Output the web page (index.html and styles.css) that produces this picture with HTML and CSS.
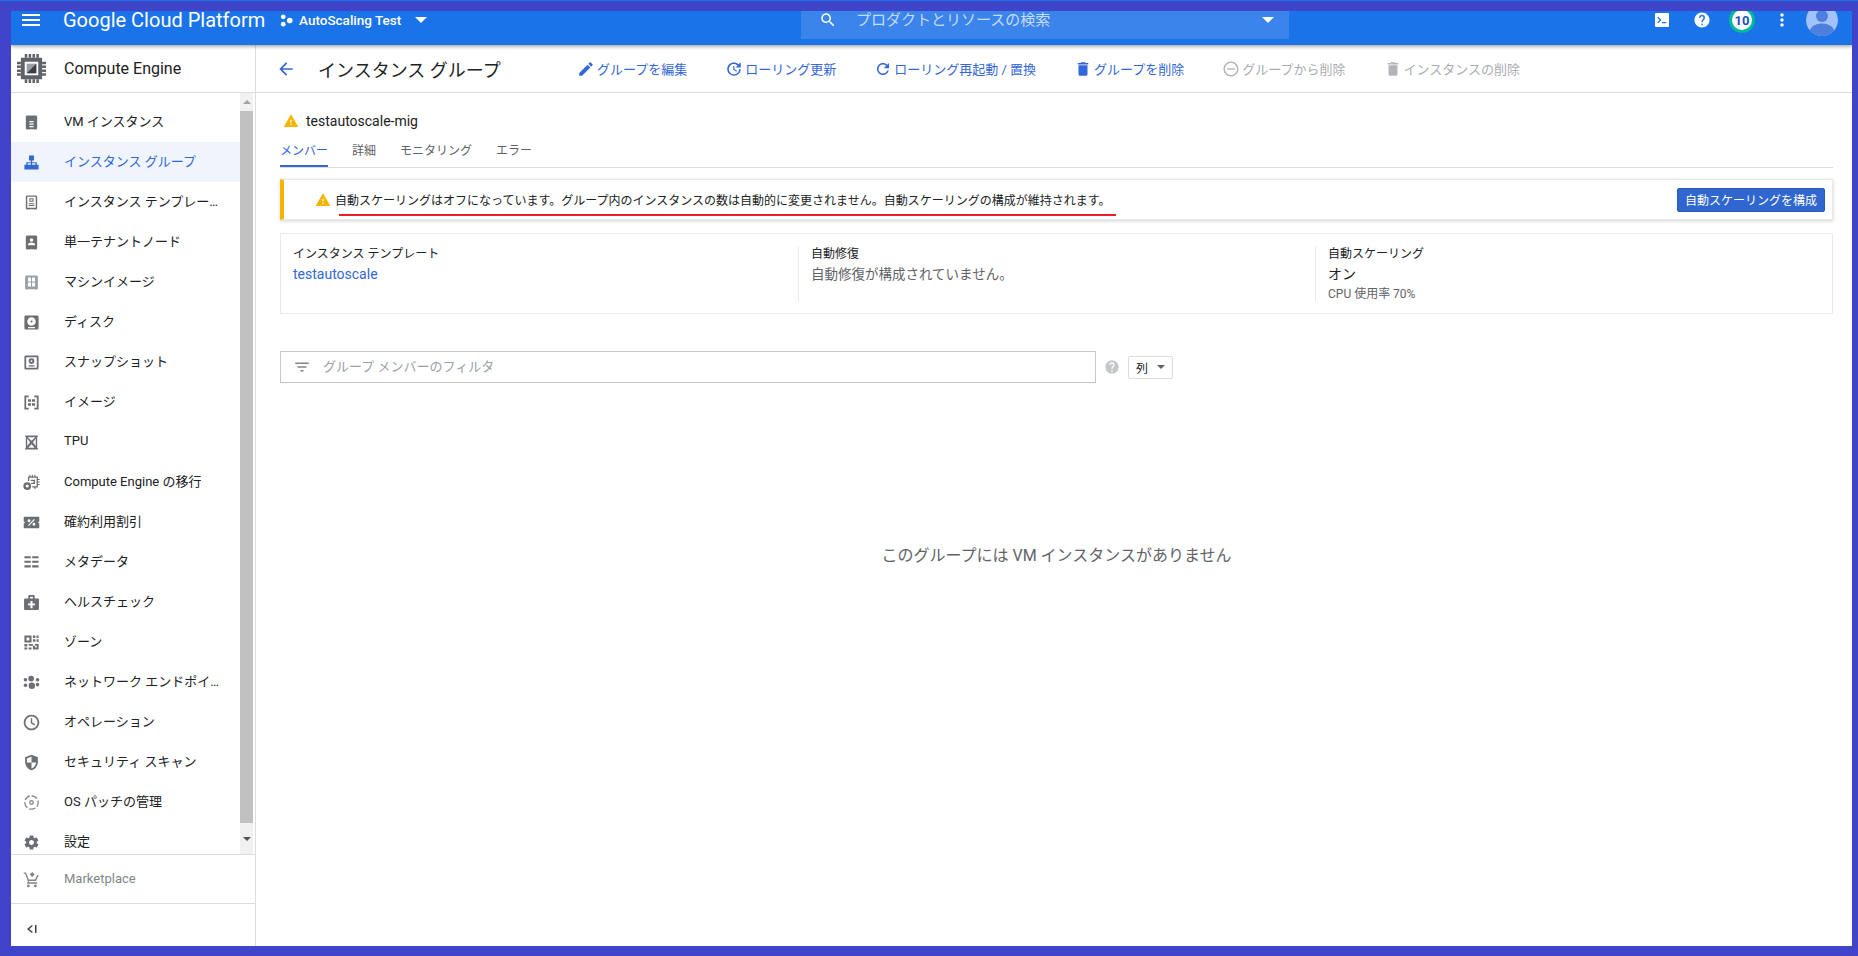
FILE: index.html
```html
<!DOCTYPE html>
<html lang="ja">
<head>
  <meta charset="UTF-8" />
  <meta name="viewport" content="width=device-width, initial-scale=1.0"/>
  <title>インスタンス グループ</title>
  <link rel="stylesheet" href="styles.css">
</head>
<body>

<div class="frame">
  <!-- 上部バー -->
  <header class="topbar">
    <svg class="menu-icon" viewBox="0 0 24 24"><path d="M3 18h18v-2H3v2zm0-5h18v-2H3v2zm0-7v2h18V6H3z"/></svg>
    <span class="brand">Google Cloud Platform</span>
    <svg class="project-icon" viewBox="0 0 12 12"><circle cx="3" cy="2.600" r="2.200"/><circle cx="3" cy="9.400" r="2.200"/><circle cx="9" cy="6" r="2.600"/></svg>
    <span class="project-name">AutoScaling Test</span>
    <span class="caret caret-project"></span>
    <div class="search-box">
      <svg class="search-icon" viewBox="0 0 24 24"><path d="M15.500 14h-.79l-.28-.27C15.410 12.590 16 11.110 16 9.500 16 5.910 13.090 3 9.500 3S3 5.910 3 9.500 5.910 16 9.500 16c1.610 0 3.090-.59 4.230-1.570l.27.28v.79l5 4.990L20.490 19l-4.990-5zm-6 0C7.010 14 5 11.990 5 9.500S7.010 5 9.500 5 14 7.010 14 9.500 11.990 14 9.500 14z"/></svg>
      <span class="search-text">プロダクトとリソースの検索</span>
      <span class="caret caret-search"></span>
    </div>
    <div class="topbar-right">
      <svg class="terminal-icon" viewBox="0 0 14 14"><path fill-rule="evenodd" d="M1 0h12a1 1 0 0 1 1 1v12a1 1 0 0 1-1 1H1a1 1 0 0 1-1-1V1a1 1 0 0 1 1-1zm1.200 4.600L4.600 7 2.200 9.400l1 .9L6.500 7 3.200 3.700zM7 9v1.300h4.200V9z"/></svg>
      <svg class="help-icon" viewBox="0 0 24 24"><path d="M12 2C6.480 2 2 6.480 2 12s4.480 10 10 10 10-4.480 10-10S17.520 2 12 2zm1 17h-2v-2h2v2zm2.070-7.750l-.9.92C13.450 12.900 13 13.500 13 15h-2v-.5c0-1.100.45-2.100 1.170-2.830l1.240-1.260c.37-.36.59-.86.59-1.410 0-1.100-.9-2-2-2s-2 .9-2 2H8c0-2.210 1.790-4 4-4s4 1.790 4 4c0 .88-.36 1.680-.93 2.250z"/></svg>
      <span class="badge">10</span>
      <svg class="more-icon" viewBox="0 0 24 24"><path d="M12 8c1.100 0 2-.9 2-2s-.9-2-2-2-2 .9-2 2 .9 2 2 2zm0 2c-1.100 0-2 .9-2 2s.9 2 2 2 2-.9 2-2-.9-2-2-2zm0 6c-1.100 0-2 .9-2 2s.9 2 2 2 2-.9 2-2-.9-2-2-2z"/></svg>
      <svg class="avatar" viewBox="0 0 32 32"><defs><clipPath id="avatarClip"><circle cx="16" cy="16" r="16"/></clipPath></defs><circle cx="16" cy="16" r="16" fill="#a1c2fa"/><g clip-path="url(#avatarClip)" fill="#4d7fdc"><circle cx="16" cy="12" r="6"/><ellipse cx="16" cy="27" rx="12" ry="7.500"/></g></svg>
    </div>
  </header>

  <div class="body-row">
    <!-- サイドバー -->
    <aside class="sidebar">
      <div class="product">
        <svg class="chip-icon" viewBox="0 0 30 30">
          <path fill="#5f6368" d="M8 0h2.600v4H8zM12 0h2.600v4H12zM16 0h2.600v4H16zM20 0h2.600v4H20zM8 26h2.600v4H8zM12 26h2.600v4H12zM16 26h2.600v4H16zM20 26h2.600v4H20zM0 8h4v2.600H0zM0 12h4v2.600H0zM0 16h4v2.600H0zM0 20h4v2.600H0zM26 8h4v2.600h-4zM26 12h4v2.600h-4zM26 16h4v2.600h-4zM26 20h4v2.600h-4z"/>
          <path fill="#5f6368" fill-rule="evenodd" d="M4 4h22v22H4zM8 8v14h14V8z"/>
          <path fill="#9aa0a6" d="M10 10h10v10H10z"/>
          <path fill="#3c4043" d="M20 10v10H10z"/>
        </svg>
        <span class="product-name">Compute Engine</span>
      </div>

      <div class="nav-wrap">
        <ul class="nav">
          <li class="nav-item"><svg viewBox="0 0 24 24"><path fill-rule="evenodd" d="M6 2h12a2 2 0 0 1 2 2v16a2 2 0 0 1-1 1.700V22h-4v-.5H9v.5H5v-.3A2 2 0 0 1 4 20V4a2 2 0 0 1 2-2zm3 8v1.800h6V10zm0 3.500v1.800h6v-1.800zm0 3.500v1.800h6V17z"/></svg><span>VM インスタンス</span></li>
          <li class="nav-item active"><svg viewBox="0 0 24 24"><path d="M8.500 2h7v7h-2.600v2.500h6.500V15H22v7h-7v-7h2.500v-2H12.800v2H15.500v7h-7v-7h2.700v-2H6.500v2H9v7H2v-7h2.600v-3.500h6.500V9H8.500z"/></svg><span>インスタンス グループ</span></li>
          <li class="nav-item"><svg viewBox="0 0 24 24"><path fill-rule="evenodd" d="M6 2h12a2 2 0 0 1 2 2v16a2 2 0 0 1-1 1.700V22h-4v-.5H9v.5H5v-.3A2 2 0 0 1 4 20V4a2 2 0 0 1 2-2zm0 2v15.500h12V4zm3 2h6v5H9zm1.500 1.500v2h3v-2zM8 13h8v1.500H8zm0 2.500h8V17H8z"/></svg><span>インスタンス テンプレート</span></li>
          <li class="nav-item"><svg viewBox="0 0 24 24"><path fill-rule="evenodd" d="M6 2h12a2 2 0 0 1 2 2v16a2 2 0 0 1-1 1.700V22h-4v-.5H9v.5H5v-.3A2 2 0 0 1 4 20V4a2 2 0 0 1 2-2zm6 4a2.500 2.500 0 1 0 0 5 2.500 2.500 0 0 0 0-5zm-5 10h10v-1.500c0-1.500-3-2.500-5-2.500s-5 1-5 2.500z"/></svg><span>単一テナントノード</span></li>
          <li class="nav-item"><svg class="light" viewBox="0 0 24 24"><path fill-rule="evenodd" d="M5 2h14a2 2 0 0 1 2 2v16a2 2 0 0 1-1 1.700V22h-3v-.5H7v.5H4v-.3A2 2 0 0 1 3 20V4a2 2 0 0 1 2-2zm2 3v5.500h4.300V5zm5.700 0v5.500H17V5zM7 12v5.500h4.300V12zm5.700 0v5.500H17V12z"/></svg><span>マシンイメージ</span></li>
          <li class="nav-item"><svg viewBox="0 0 24 24"><path fill-rule="evenodd" d="M4 2h16a2 2 0 0 1 2 2v16a2 2 0 0 1-2 2H4a2 2 0 0 1-2-2V4a2 2 0 0 1 2-2zm8 2.500a6 6 0 1 0 0 12 6 6 0 0 0 0-12zm0 4.500a1.500 1.500 0 1 1 0 3 1.500 1.500 0 0 1 0-3zM7 18.500V20h10v-1.500z"/></svg><span>ディスク</span></li>
          <li class="nav-item"><svg viewBox="0 0 24 24"><path fill-rule="evenodd" d="M4 2h16a2 2 0 0 1 2 2v16a2 2 0 0 1-2 2H4a2 2 0 0 1-2-2V4a2 2 0 0 1 2-2zm.5 2.500v15h15v-15zM12 6a4 4 0 1 1 0 8 4 4 0 0 1 0-8zm0 2.700a1.300 1.300 0 1 0 0 2.600 1.300 1.300 0 0 0 0-2.600zM8 16h8v1.500H8z"/></svg><span>スナップショット</span></li>
          <li class="nav-item"><svg viewBox="0 0 24 24"><path fill-rule="evenodd" d="M2 2h6v2.500H4.500v15H8V22H2zM16 2h6v20h-6v-2.500h3.500v-15H16zM7 7.500h4.300v3.500H7zm5.700 0H17v3.500h-4.300zM7 13h4.300v3.500H7zm5.700 0H17v3.500h-4.300z"/></svg><span>イメージ</span></li>
          <li class="nav-item"><svg viewBox="0 0 24 24"><path fill-rule="evenodd" d="M3 2h18v1.500l-1 1v15l1 1V22H3v-1.500l1-1v-15l-1-1zm3.500 2.500L12 9.500l5.500-5zM6 6.500v10.500l4-5.500zM18 6.500L14 11.500l4 5.500zM12 14.500l-4.500 5h9z"/></svg><span>TPU</span></li>
          <li class="nav-item"><svg viewBox="0 0 24 24"><path fill-rule="evenodd" d="M9 1h1.500v2.500h2V1H14v2.500h2V1h1.500v2.500H21v3.500h2.500v1.500H21v2h2.500V12H21v2h2.500v1.500H21v3.500h-3.500V21H16v-2h-3v-1.800h6.200V5.300H8.800V10H7V3.500h2zM11 8h6v6h-5.500v-1.800H15V10h-4z"/><path fill-rule="evenodd" d="M6 11.500a5.500 5.500 0 1 1 0 11 5.500 5.500 0 0 1 0-11zm0 3.300a2.200 2.200 0 1 0 0 4.400 2.200 2.200 0 0 0 0-4.400z"/></svg><span>Compute Engine の移行</span></li>
          <li class="nav-item"><svg class="wide" viewBox="0 0 24 18"><path fill-rule="evenodd" d="M2 1h20a1 1 0 0 1 1 1v5.500a1.500 1.500 0 0 0 0 3V16a1 1 0 0 1-1 1H2a1 1 0 0 1-1-1v-5.500a1.500 1.500 0 0 0 0-3V2a1 1 0 0 1 1-1zm6.500 3.500a2 2 0 1 0 0 4 2 2 0 0 0 0-4zm7-.3L7 13l1.200 1L16.700 5.200zM15.500 9.500a2 2 0 1 0 0 4 2 2 0 0 0 0-4z"/></svg><span>確約利用割引</span></li>
          <li class="nav-item"><svg viewBox="0 0 24 24"><path d="M2 3h9v3H2zM13 3h9v3h-9zM2 9.500h9v3H2zM13 9.500h9v3h-9zM2 16h9v3H2zM13 16h9v3h-9z"/></svg><span>メタデータ</span></li>
          <li class="nav-item"><svg viewBox="0 0 24 24"><path fill-rule="evenodd" d="M9 1.500h6a1.500 1.500 0 0 1 1.500 1.500v3.500H21a1.500 1.500 0 0 1 1.500 1.500v13a1.500 1.500 0 0 1-1.500 1.500H3A1.500 1.500 0 0 1 1.500 21V8A1.500 1.500 0 0 1 3 6.500h4.500V3A1.500 1.500 0 0 1 9 1.500zM10 4v2.500h4V4zm.5 6v3.500H7v2.500h3.500V20H13.500v-4H17v-2.500h-3.500V10z"/></svg><span>ヘルスチェック</span></li>
          <li class="nav-item"><svg viewBox="0 0 24 24"><path fill-rule="evenodd" d="M2 2h10v10H2zm3 3v4h4V5zM14 2h3.500v3.500H14zm5 0h3v3.500h-3zm-5 5.500h3.500V11H14zm5 0h3V11h-3zM2 14h4v3.500H2zm0 5h4v3H2zm6 0h4v3H8zm0-5h14v8H14v-8h3v5h2.500v-2.500H8z"/></svg><span>ゾーン</span></li>
          <li class="nav-item"><svg viewBox="0 0 24 24"><circle cx="3.500" cy="8" r="2.500"/><circle cx="3.500" cy="16" r="2.500"/><circle cx="11.500" cy="6.500" r="4"/><circle cx="12.500" cy="16.500" r="4.500"/><circle cx="20.500" cy="8" r="2.500"/><circle cx="20.500" cy="15" r="2.500"/></svg><span>ネットワーク エンドポイント グループ</span></li>
          <li class="nav-item"><svg viewBox="0 0 24 24"><path d="M11.990 1C5.900 1 1 5.930 1 12s4.900 11 10.990 11C18.070 23 23 18.070 23 12S18.070 1 11.990 1zM12 20.500c-4.700 0-8.500-3.800-8.500-8.500s3.800-8.500 8.500-8.500 8.500 3.800 8.500 8.500-3.800 8.500-8.500 8.500zM13 6h-2v7l5.300 3.200 1-1.600-4.300-2.600z"/></svg><span>オペレーション</span></li>
          <li class="nav-item"><svg viewBox="0 0 24 24"><path d="M12 1L3 4.500v6.600c0 5.500 3.800 10.600 9 11.900 5.200-1.300 9-6.400 9-11.900V4.500zm0 11h6.500c-.5 4-3.200 7.500-6.500 8.500V12H5.500V6.200L12 3.600z"/></svg><span>セキュリティ スキャン</span></li>
          <li class="nav-item"><svg class="outline" viewBox="0 0 24 24"><path stroke-dasharray="9 3" d="M12 2.500a9.500 9.500 0 1 1 0 19 9.500 9.500 0 1 1 0-19z"/><circle cx="12" cy="12" r="2.500"/></svg><span>OS パッチの管理</span></li>
          <li class="nav-item"><svg viewBox="0 0 24 24"><path d="M19.430 12.980c.04-.32.07-.64.07-.98s-.03-.66-.07-.98l2.110-1.650c.19-.15.24-.42.12-.64l-2-3.460c-.12-.22-.39-.3-.61-.22l-2.490 1c-.52-.4-1.080-.73-1.690-.98l-.38-2.650C14.460 2.180 14.250 2 14 2h-4c-.25 0-.46.18-.49.42l-.38 2.650c-.61.25-1.170.59-1.690.98l-2.490-1c-.23-.09-.49 0-.61.22l-2 3.460c-.13.22-.07.49.12.64l2.110 1.650c-.04.32-.07.65-.07.98s.03.66.07.98l-2.110 1.650c-.19.15-.24.42-.12.64l2 3.460c.12.22.39.3.61.22l2.490-1c.52.4 1.080.73 1.690.98l.38 2.650c.03.24.24.42.49.42h4c.25 0 .46-.18.49-.42l.38-2.650c.61-.25 1.170-.59 1.690-.98l2.490 1c.23.09.49 0 .61-.22l2-3.460c.12-.22.07-.49-.12-.64l-2.110-1.650zM12 15.500c-1.930 0-3.500-1.570-3.500-3.500s1.570-3.500 3.500-3.500 3.500 1.570 3.500 3.500-1.570 3.500-3.500 3.500z"/></svg><span>設定</span></li>
        </ul>
        <div class="scrollbar">
          <div class="scroll-arrow"><span class="arrow-up"></span></div>
          <div class="scroll-thumb"></div>
          <div class="scroll-arrow scroll-arrow-down"><span class="arrow-down"></span></div>
        </div>
      </div>

      <div class="market">
        <svg viewBox="0 0 24 24"><path d="M13 1.500l3.500 3.500L13 8.500 9.500 5zM1 2h3.300l3.700 10h9l3-6.500h2.200l-3.800 8.700H8.600L8 16h12v2H5.500l1.300-3.500L3 4H1z"/><circle cx="7.500" cy="21" r="2"/><circle cx="17.500" cy="21" r="2"/></svg>
        <span>Marketplace</span>
      </div>
      <div class="collapse">
        <svg viewBox="0 0 12 12"><path d="M6 2L1 6l5 4 .8-1L3.300 6l3.500-3zM9 2h1.500v8H9z"/></svg>
      </div>
    </aside>

    <div class="content">
      <!-- 操作バー -->
      <div class="toolbar">
        <svg class="back-icon" viewBox="0 0 24 24"><path d="M20 11H7.830l5.590-5.590L12 4l-8 8 8 8 1.410-1.410L7.830 13H20v-2z"/></svg>
        <h1 class="page-title">インスタンス グループ</h1>
        <div class="actions">
          <a class="action"><svg viewBox="0 0 24 24"><path d="M3 17.250V21h3.750L17.810 9.940l-3.750-3.750L3 17.250zM20.710 7.040c.39-.39.39-1.020 0-1.410l-2.340-2.340c-.39-.39-1.020-.39-1.410 0l-1.830 1.830 3.750 3.750 1.830-1.830z"/></svg>グループを編集</a>
          <a class="action"><svg viewBox="0 0 24 24"><path d="M21 10.120h-6.780l2.740-2.820c-2.730-2.700-7.150-2.800-9.880-.1-2.730 2.710-2.730 7.080 0 9.790s7.150 2.710 9.880 0C18.320 15.650 19 14.080 19 12.100h2c0 1.980-.88 4.550-2.640 6.290-3.510 3.480-9.210 3.480-12.720 0-3.500-3.470-3.530-9.110-.02-12.580s9.140-3.470 12.650 0L21 3v7.120zM12.500 8v4.250l3.500 2.080-.72 1.210L11 13V8h1.500z"/></svg>ローリング更新</a>
          <a class="action"><svg viewBox="0 0 24 24"><path d="M17.650 6.350C16.200 4.900 14.210 4 12 4c-4.420 0-7.990 3.580-7.990 8s3.570 8 7.990 8c3.730 0 6.840-2.550 7.730-6h-2.080c-.82 2.330-3.040 4-5.650 4-3.310 0-6-2.690-6-6s2.690-6 6-6c1.660 0 3.140.69 4.220 1.780L13 11h7V4l-2.350 2.350z"/></svg>ローリング再起動 / 置換</a>
          <a class="action"><svg viewBox="0 0 24 24"><path d="M6 19c0 1.100.9 2 2 2h8c1.100 0 2-.9 2-2V7H6v12zM19 4h-3.500l-1-1h-5l-1 1H5v2h14V4z"/></svg>グループを削除</a>
          <a class="action disabled"><svg viewBox="0 0 24 24"><path d="M7 11v2h10v-2H7zm5-9C6.480 2 2 6.480 2 12s4.480 10 10 10 10-4.480 10-10S17.520 2 12 2zm0 18c-4.410 0-8-3.590-8-8s3.590-8 8-8 8 3.590 8 8-3.590 8-8 8z"/></svg>グループから削除</a>
          <a class="action disabled"><svg viewBox="0 0 24 24"><path d="M6 19c0 1.100.9 2 2 2h8c1.100 0 2-.9 2-2V7H6v12zM19 4h-3.500l-1-1h-5l-1 1H5v2h14V4z"/></svg>インスタンスの削除</a>
        </div>
      </div>

      <main class="main">
        <div class="group-name">
          <svg class="warn-icon" viewBox="0 0 24 24"><path d="M1 21h22L12 2 1 21zm12-3h-2v-2h2v2zm0-4h-2v-4h2v4z"/></svg>
          <span>testautoscale-mig</span>
        </div>

        <div class="tabs">
          <span class="tab active">メンバー</span>
          <span class="tab">詳細</span>
          <span class="tab">モニタリング</span>
          <span class="tab">エラー</span>
        </div>

        <div class="alert">
          <svg class="warn-icon" viewBox="0 0 24 24"><path d="M1 21h22L12 2 1 21zm12-3h-2v-2h2v2zm0-4h-2v-4h2v4z"/></svg>
          <span class="alert-text">自動スケーリングはオフになっています。グループ内のインスタンスの数は自動的に変更されません。自動スケーリングの構成が維持されます。</span>
          <button class="primary-btn">自動スケーリングを構成</button>
        </div>

        <div class="info">
          <div class="info-col">
            <div class="info-label">インスタンス テンプレート</div>
            <a class="info-link">testautoscale</a>
          </div>
          <div class="info-col">
            <div class="info-label">自動修復</div>
            <div class="info-muted">自動修復が構成されていません。</div>
          </div>
          <div class="info-col">
            <div class="info-label">自動スケーリング</div>
            <div class="info-value">オン</div>
            <div class="info-small">CPU 使用率 70%</div>
          </div>
        </div>

        <div class="filter-row">
          <div class="filter">
            <svg viewBox="0 0 24 24"><path d="M10 18h4v-2h-4v2zM3 6v2h18V6H3zm3 7h12v-2H6v2z"/></svg>
            <span>グループ メンバーのフィルタ</span>
          </div>
          <svg class="filter-help" viewBox="0 0 24 24"><path d="M12 2C6.480 2 2 6.480 2 12s4.480 10 10 10 10-4.480 10-10S17.520 2 12 2zm1 17h-2v-2h2v2zm2.070-7.750l-.9.92C13.450 12.900 13 13.500 13 15h-2v-.5c0-1.100.45-2.100 1.170-2.830l1.240-1.260c.37-.36.59-.86.59-1.410 0-1.100-.9-2-2-2s-2 .9-2 2H8c0-2.210 1.790-4 4-4s4 1.790 4 4c0 .88-.36 1.680-.93 2.250z"/></svg>
          <button class="col-btn">列<span class="col-caret"></span></button>
        </div>

        <p class="empty">このグループには VM インスタンスがありません</p>
      </main>
    </div>
  </div>
</div>

</body>
</html>
```

FILE: styles.css
```css
* {
  box-sizing: border-box;
}

html, body {
  height: 100%;
  margin: 0;
}

body {
  background-color: #4044c8;
  border-top: 1px solid #1a73e8;
  font-family: Roboto, "Noto Sans CJK JP", sans-serif;
  font-size: 13px;
  color: #202124;
  overflow: hidden;
}

.frame {
  height: 100%;
  padding: 10px 6px 10px 11px;
  display: flex;
  flex-direction: column;
}

/* 上部バー */
.topbar {
  position: relative;
  z-index: 2;
  height: 34px;
  min-height: 0;
  flex: none;
  display: flex;
  align-items: center;
  background-color: #1a73e8;
  box-shadow: 0 1px 4px rgba(0, 0, 0, 0.45);
  padding-bottom: 16px;
  color: #fff;
  clip-path: inset(0 0 -8px 0);
}

.topbar svg {
  fill: #fff;
  flex: none;
}

.menu-icon {
  width: 24px;
  height: 24px;
  margin-left: 8px;
}

.brand {
  font-size: 20px;
  margin-left: 20px;
  width: 194px;
  white-space: nowrap;
}

.project-icon {
  width: 13px;
  height: 13px;
  margin-left: 23px;
}

.project-name {
  font-size: 13.5px;
  font-weight: 500;
  margin-left: 6px;
  width: 106px;
  white-space: nowrap;
}

.caret {
  width: 0;
  height: 0;
  border-left: 6px solid transparent;
  border-right: 6px solid transparent;
  border-top: 6px solid #fff;
  flex: none;
}

.caret-project {
  margin-left: 10px;
}

.search-box {
  align-self: flex-start;
  height: 28px;
  width: 488px;
  margin-left: 374px;
  padding-bottom: 10px;
  background-color: #3b84ec;
  display: flex;
  align-items: center;
}

.search-icon {
  width: 18px;
  height: 18px;
  margin-left: 18px;
}

.search-text {
  font-size: 15px;
  color: rgba(255, 255, 255, 0.72);
  margin-left: 19px;
  padding-bottom: 3px;
  flex: 1;
  white-space: nowrap;
}

.caret-search {
  margin-right: 15px;
}

.topbar-right {
  margin-left: auto;
  display: flex;
  align-items: center;
  height: 18px;
  padding-right: 14px;
}

.terminal-icon {
  width: 14px;
  height: 14px;
}

.help-icon {
  width: 18px;
  height: 18px;
  margin-left: 24px;
}

.badge {
  width: 26px;
  height: 26px;
  margin-left: 18px;
  border-radius: 50%;
  background-color: #fff;
  border: 3px solid #00b89a;
  color: #1a4fc0;
  font-size: 13px;
  font-weight: 700;
  display: flex;
  align-items: center;
  justify-content: center;
  flex: none;
}

.more-icon {
  width: 20px;
  height: 20px;
  margin-left: 17px;
}

.avatar {
  width: 32px;
  height: 32px;
  margin-left: 14px;
}

.body-row {
  flex: 1;
  display: flex;
  min-height: 0;
  background-color: #fff;
}

/* サイドバー */
.sidebar {
  flex: none;
  width: 245px;
  min-width: 0;
  display: flex;
  flex-direction: column;
  border-right: 1px solid #dadce0;
}

.product {
  flex: 0 0 48px;
  display: flex;
  align-items: center;
  border-bottom: 1px solid #dadce0;
}

.chip-icon {
  width: 29px;
  height: 29px;
  margin-left: 6px;
}

.product-name {
  font-size: 16px;
  margin-left: 18px;
  white-space: nowrap;
}

.nav-wrap {
  flex: 1;
  min-height: 0;
  min-width: 0;
  display: flex;
}

.nav {
  flex: 1;
  min-width: 0;
  list-style: none;
  margin: 0;
  padding: 9px 0 0;
  overflow: hidden;
}

.nav-item {
  height: 40px;
  display: flex;
  align-items: center;
  padding: 0 20px 0 12px;
}

.nav-item svg {
  width: 17px;
  height: 17px;
  flex: none;
  fill: #6b6e72;
  margin-right: 24px;
}

.nav-item span {
  padding-bottom: 3px;
  white-space: nowrap;
  overflow: hidden;
  text-overflow: ellipsis;
}

.nav-item svg.light {
  fill: #9aa0a6;
}

.nav-item svg.outline {
  fill: none;
  stroke: #80868b;
  stroke-width: 1.8;
}

.nav-item.active {
  background-color: #eff4fd;
  color: #3367d6;
}

.nav-item.active svg {
  fill: #3367d6;
}

.scrollbar {
  flex: 0 0 13px;
  margin-right: 2px;
  display: flex;
  flex-direction: column;
  background-color: #f1f1f1;
}

.scroll-arrow {
  flex: 0 0 18px;
  display: flex;
  align-items: center;
  justify-content: center;
}

.scroll-arrow-down {
  flex: 1;
}

.arrow-up, .arrow-down {
  width: 0;
  height: 0;
  border-left: 4px solid transparent;
  border-right: 4px solid transparent;
}

.arrow-up {
  border-bottom: 4px solid #a3a3a3;
}

.arrow-down {
  border-top: 4px solid #505050;
}

.scroll-thumb {
  flex: 0 0 712px;
  background-color: #c1c1c1;
}

.market {
  flex: 0 0 49px;
  display: flex;
  align-items: center;
  padding-left: 12px;
  border-top: 1px solid #dadce0;
  color: #80868b;
}

.market svg {
  width: 17px;
  height: 17px;
  fill: #80868b;
  margin-right: 24px;
}

.market span {
  padding-bottom: 2px;
}

.collapse {
  flex: 0 0 43px;
  display: flex;
  align-items: center;
  padding: 8px 0 0 15px;
  border-top: 1px solid #dadce0;
}

.collapse svg {
  width: 12px;
  height: 12px;
  fill: #3c4043;
}

/* メイン */
.content {
  flex: 1;
  min-width: 0;
  display: flex;
  flex-direction: column;
}

.toolbar {
  flex: 0 0 48px;
  display: flex;
  align-items: center;
  border-bottom: 1px solid #dadce0;
  padding-left: 20px;
}

.back-icon {
  width: 20px;
  height: 20px;
  fill: #3367d6;
  flex: none;
}

.page-title {
  font-size: 18px;
  font-weight: 400;
  margin: 0 0 0 22px;
  width: 259px;
  white-space: nowrap;
}

.actions {
  display: flex;
  align-items: center;
  gap: 38px;
}

.action {
  display: flex;
  align-items: center;
  gap: 2px;
  color: #3367d6;
  white-space: nowrap;
}

.action svg {
  width: 18px;
  height: 18px;
  fill: #3367d6;
}

.action.disabled {
  color: #a9acb0;
}

.action.disabled svg {
  fill: #b3b5b8;
}

.main {
  flex: 1;
  padding: 18px 19px 0 24px;
  display: flex;
  flex-direction: column;
  min-height: 0;
}

.group-name {
  display: flex;
  align-items: center;
  gap: 7px;
  height: 20px;
  padding-left: 3px;
  font-size: 14px;
}

.warn-icon {
  width: 16px;
  height: 16px;
  fill: #f4b400;
  flex: none;
}

.tabs {
  display: flex;
  gap: 24px;
  height: 37px;
  border-bottom: 1px solid #dadce0;
  color: #5f6368;
  font-size: 12px;
}

.tab {
  height: 36px;
  padding-top: 10px;
  border-bottom: 2px solid transparent;
}

.tab.active {
  color: #3367d6;
  border-bottom-color: #3367d6;
}

.alert {
  margin-top: 11px;
  height: 41px;
  display: flex;
  align-items: center;
  border: 1px solid #e8eaed;
  border-left: 4px solid #f4b400;
  box-shadow: 0 1px 3px rgba(60, 64, 67, 0.25);
  padding: 0 7px 0 31px;
  font-size: 12px;
}

.alert-text {
  position: relative;
  margin-left: 4px;
  flex: 1;
  white-space: nowrap;
}

/* 赤い下線 (手書きの注釈) */
.alert-text::after {
  content: "";
  position: absolute;
  left: 4px;
  top: 23px;
  width: 777px;
  height: 1.5px;
  background-color: #ee1c25;
}

.primary-btn {
  width: 148px;
  height: 24px;
  padding: 0;
  background-color: #2f66cf;
  color: #fff;
  border: 1px solid #2a5cc0;
  border-radius: 2px;
  font-family: inherit;
  font-size: 12px;
}

.info {
  margin-top: 13px;
  height: 81px;
  display: flex;
  border: 1px solid #e8eaed;
  padding: 12px 0;
  font-size: 12px;
}

.info-col {
  padding-left: 12px;
  line-height: 20px;
}

.info-col:nth-child(1) {
  width: 517px;
}

.info-col:nth-child(2) {
  width: 517px;
  border-left: 1px solid #e8eaed;
}

.info-col:nth-child(3) {
  flex: 1;
  border-left: 1px solid #e8eaed;
}

.info-label {
  margin-top: -2px;
}

.info-link {
  color: #3367d6;
  font-size: 14px;
}

.info-muted {
  color: #5f6368;
  font-size: 13.5px;
}

.info-value {
  font-size: 14px;
}

.info-small {
  color: #5f6368;
  font-size: 12px;
}

.filter-row {
  margin-top: 37px;
  display: flex;
  align-items: center;
}

.filter {
  width: 816px;
  height: 32px;
  display: flex;
  align-items: center;
  border: 1px solid #c4c7ca;
  padding-left: 12px;
  color: #9aa0a6;
}

.filter svg {
  width: 18px;
  height: 18px;
  fill: #80868b;
  margin-right: 12px;
}

.filter span {
  padding-bottom: 3px;
}

.filter-help {
  width: 16px;
  height: 16px;
  fill: #c4c7ca;
  margin-left: 8px;
}

.col-btn {
  width: 45px;
  height: 23px;
  margin-left: 8px;
  padding: 0 0 0 7px;
  display: flex;
  align-items: center;
  background-color: #fff;
  border: 1px solid #dadce0;
  border-radius: 2px;
  font-family: inherit;
  font-size: 12px;
  color: #202124;
}

.col-caret {
  width: 0;
  height: 0;
  margin-left: 9px;
  border-left: 4px solid transparent;
  border-right: 4px solid transparent;
  border-top: 4px solid #5f6368;
}

.empty {
  margin: 159px 0 0;
  text-align: center;
  font-size: 16px;
  color: #5f6368;
}
```
